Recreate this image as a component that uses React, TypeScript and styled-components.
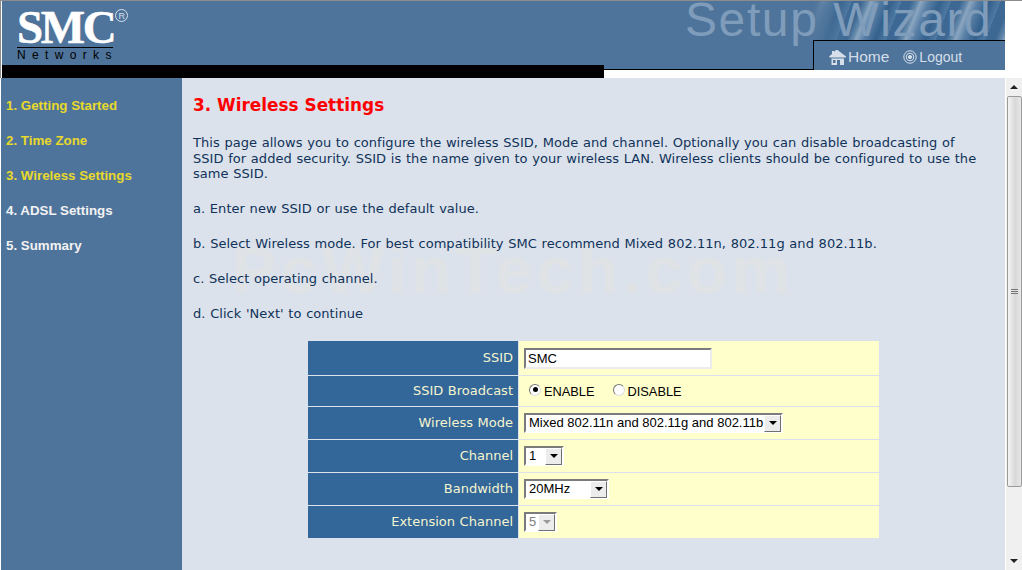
import React from 'react'
import styled, { createGlobalStyle } from 'styled-components'

const GlobalStyle = createGlobalStyle`
html, body {
  margin: 0;
  padding: 0;
  background: #fff;
  overflow: hidden;
}
`;

const Page = styled.div`
width: 1022px;
height: 570px;
display: flex;
flex-direction: column;
overflow: hidden;
box-sizing: border-box;
border-top: 1px solid #8c8c8c;
`;

// header
const Banner = styled.div`
height: 77px;
flex: none;
display: flex;
padding-left: 2px;
box-shadow: inset 1px 0 0 #8c8c8c;
`;
const BrandColumn = styled.div`
width: 602px;
display: flex;
flex-direction: column;
`;
const Brand = styled.div`
height: 64px;
flex: none;
background: #4f749b;
padding: 8px 0 0 15px;
box-sizing: border-box;
`;
const BlackBar = styled.div`
height: 13px;
background: #000;
`;
const Logo = styled.div`
position: relative;
width: 96px;
height: 38px;
font-family: "Liberation Serif", serif;
font-weight: bold;
font-size: 47px;
line-height: 37px;
letter-spacing: -2.4px;
-webkit-text-stroke: 0.5px #fff;
color: #fff;
white-space: nowrap;
border-bottom: 1px solid #000;
`;
const LogoMark = styled.span`
position: absolute;
display: block;
left: 98px;
top: 0;
width: 13px;
height: 13px;
color: #d5dfe9;
-webkit-text-stroke: 0;
svg {
  display: block;
}
`;
const LogoSub = styled.div`
font-family: "Liberation Sans", sans-serif;
font-size: 12px;
line-height: 14px;
letter-spacing: 6.35px;
color: #000;
white-space: nowrap;
`;
const WizardColumn = styled.div`
width: 401px;
height: 69px;
display: flex;
flex-direction: column;
`;
const WizardTitle = styled.div`
position: relative;
height: 39px;
flex: none;
box-sizing: border-box;
background:
  linear-gradient(90deg, #4f749b 0 205px, rgba(79, 116, 155, 0) 250px),
  repeating-linear-gradient(112deg, #3d6893 0 9px, #6489ab 15px, #8ba6c0 18px, #5a80a6 25px, #34618d 36px, #4f7aa3 46px);
font-family: "Liberation Sans", sans-serif;
font-size: 48px;
line-height: 37px;
letter-spacing: 1.6px;
color: #7f9cba;
padding-left: 81px;
white-space: nowrap;
`;
const TabRow = styled.div`
flex: 1;
display: flex;
`;
const TabSpacer = styled.div`
width: 209px;
flex: none;
background: #4f749b;
border-bottom: 1px solid #000;
`;
const Tab = styled.div`
flex: 1;
background: #4f749b;
border-top: 1px solid #000;
border-left: 1px solid #000;
display: flex;
align-items: center;
padding: 3px 0 0 15px;
gap: 14px;
`;
const TabLink = styled.a<{ $size: number }>`
display: inline-flex;
align-items: center;
gap: 2px;
font-family: "Liberation Sans", sans-serif;
font-size: ${({ $size }) => $size}px;
color: #d6dfe9;
svg {
  display: block;
}
`;

// body
const Main = styled.div`
flex: 1;
display: flex;
min-height: 0;
`;
const Sidebar = styled.ul`
width: 181px;
flex: none;
margin: 0 0 0 1px;
padding: 18px 0 0 5px;
box-sizing: border-box;
list-style: none;
background: #4f749b;
`;
const Step = styled.li<{ $done?: boolean }>`
font-family: "Liberation Sans", sans-serif;
font-size: 13.33px;
font-weight: bold;
line-height: 20px;
height: 35px;
white-space: nowrap;
color: ${({ $done }) => ($done ? '#e8d92a' : '#f2f2f2')};
`;
const Content = styled.div`
position: relative;
width: 823px;
flex: none;
padding: 17px 21px 0 11px;
box-sizing: border-box;
background: #dbe2eb;
font-family: "DejaVu Sans", sans-serif;
font-size: 13px;
line-height: 15.5px;
letter-spacing: 0.04px;
word-spacing: 0.5px;
color: #10325a;
`;
const Watermark = styled.div`
position: absolute;
left: 50px;
top: 157px;
font-family: "Liberation Sans", sans-serif;
font-size: 66px;
font-weight: bold;
line-height: 70px;
letter-spacing: 4.5px;
word-spacing: 0;
color: #e0e3e6;
white-space: nowrap;
pointer-events: none;
`;
const Heading = styled.h1`
position: relative;
margin: 0 0 20px;
font-size: 16.9px;
line-height: 20px;
font-weight: bold;
letter-spacing: 0;
word-spacing: 0;
color: #ff0000;
`;
const Text = styled.p`
position: relative;
margin: 0 0 19.5px;
`;

// form table
const FormTable = styled.div`
position: relative;
width: 571px;
margin: 19px 0 0 115px;
display: grid;
grid-template-columns: 210px 361px;
`;
const Label = styled.div<{ $h: number }>`
height: ${({ $h }) => $h}px;
box-sizing: border-box;
background: #336699;
color: #f4f5cf;
letter-spacing: 0;
padding-right: 5px;
display: flex;
align-items: center;
justify-content: flex-end;
border-bottom: 1px solid #dbe2eb;
&:nth-last-child(2) {
  border-bottom: 0;
}
`;
const Value = styled.div`
box-sizing: border-box;
background: #ffffcc;
border-left: 1px solid #dbe2eb;
border-bottom: 1px solid #dbe2eb;
padding-left: 5px;
display: flex;
align-items: center;
font-family: "Liberation Sans", sans-serif;
font-size: 13px;
letter-spacing: 0;
word-spacing: 0;
color: #000;
&:last-child {
  border-bottom: 0;
}
`;
const TextField = styled.div`
width: 188px;
height: 21px;
box-sizing: border-box;
background: #fff;
border: 2px solid;
border-color: #7b7b7b #ececec #ececec #7b7b7b;
padding-left: 2px;
line-height: 17px;
`;
const RadioGroup = styled.label`
display: inline-flex;
align-items: center;
gap: 3px;
margin: 2px 13px 0 5px;
font-size: 12.8px;
`;
const Radio = styled.span<{ $on?: boolean }>`
width: 12px;
height: 12px;
box-sizing: border-box;
border-radius: 50%;
background: #fff;
border: 1px solid;
border-color: #777 #ddd #ddd #777;
display: inline-flex;
align-items: center;
justify-content: center;
margin-top: -5px;
&::after {
  content: "";
  width: 5px;
  height: 5px;
  border-radius: 50%;
  background: ${({ $on }) => ($on ? '#000' : 'transparent')};
}
`;
const SelectBox = styled.div<{ $w: number; $off?: boolean }>`
width: ${({ $w }) => $w}px;
height: 20px;
box-sizing: border-box;
background: #fff;
border: 2px solid;
border-color: #7b7b7b #fff #fff #7b7b7b;
padding-left: 3px;
display: flex;
align-items: center;
justify-content: space-between;
white-space: nowrap;
color: ${({ $off }) => ($off ? '#808080' : '#000')};
`;
const SelectArrow = styled.span<{ $off?: boolean }>`
width: 17px;
height: 17px;
flex: none;
box-sizing: border-box;
background: #ececec;
border: 1px solid;
border-color: #fff #707070 #707070 #fff;
display: flex;
align-items: center;
justify-content: center;
&::after {
  content: "";
  border-left: 4px solid transparent;
  border-right: 4px solid transparent;
  border-top: 4px solid ${({ $off }) => ($off ? '#9a9a9a' : '#000')};
}
`;

// scrollbar
const ScrollBar = styled.div`
width: 17px;
flex: none;
box-sizing: border-box;
border-left: 1px solid #fff;
background: #f0f0f0;
display: flex;
flex-direction: column;
align-items: center;
`;
const ScrollArrow = styled.div<{ $up?: boolean }>`
height: 18px;
flex: none;
display: flex;
align-items: center;
justify-content: center;
&::after {
  content: "";
  border-left: 4px solid transparent;
  border-right: 4px solid transparent;
  ${({ $up }) => ($up ? 'border-bottom: 4px solid #222;' : 'border-top: 4px solid #222;')}
}
`;
const ScrollThumb = styled.div`
width: 15px;
height: 391px;
flex: none;
box-sizing: border-box;
border: 1px solid #9a9a9a;
border-radius: 2px;
background: linear-gradient(90deg, #f4f4f4, #d8d8d8 55%, #e8e8e8);
display: flex;
align-items: center;
justify-content: center;
&::after {
  content: "";
  width: 7px;
  height: 6px;
  background: repeating-linear-gradient(180deg, #777 0 1px, transparent 1px 2px);
}
`;
const ScrollGap = styled.div`
flex: 1;
`;

const HomeIcon = () => (
  <svg width="17" height="15" viewBox="0 0 17 15" fill="#d6dfe9">
    <path d="M8.5 0 L17 6.5 L17 7.5 L1 7.5 L0 6.5 L3 4 V1 H5 V2 L7 0 Z" />
    <path d="M2.5 8.5 H15 V15 H11 V10 H8 V15 H2.5 Z M4 10 V13 H6.5 V10 Z" fillRule="evenodd" />
  </svg>
);

const LogoutIcon = () => (
  <svg width="14" height="14" viewBox="0 0 14 14" fill="none" stroke="#d6dfe9">
    <circle cx="7" cy="7" r="6.2" />
    <circle cx="7" cy="7" r="3.8" />
    <circle cx="7" cy="7" r="1.6" fill="#d6dfe9" />
  </svg>
);

const App = () => {
  return (
    <Page>
      <GlobalStyle />

      {/* header */}
      <Banner>
        <BrandColumn>
          <Brand>
            <Logo>
              SMC
              <LogoMark>
                <svg width="13" height="13" viewBox="0 0 13 13" fill="none" stroke="currentColor">
                  <circle cx="6.5" cy="6.5" r="6" />
                  <text x="3.6" y="10" fontSize="9" fontFamily="Liberation Sans" fontWeight="normal" letterSpacing="0" stroke="none" fill="currentColor">R</text>
                </svg>
              </LogoMark>
            </Logo>
            <LogoSub>Networks</LogoSub>
          </Brand>
          <BlackBar />
        </BrandColumn>
        <WizardColumn>
          <WizardTitle>Setup Wizard</WizardTitle>
          <TabRow>
            <TabSpacer />
            <Tab>
              <TabLink $size={15.5}><HomeIcon />Home</TabLink>
              <TabLink $size={14}><LogoutIcon />Logout</TabLink>
            </Tab>
          </TabRow>
        </WizardColumn>
      </Banner>

      <Main>
        {/* left menu */}
        <Sidebar>
          <Step $done>1. Getting Started</Step>
          <Step $done>2. Time Zone</Step>
          <Step $done>3. Wireless Settings</Step>
          <Step>4. ADSL Settings</Step>
          <Step>5. Summary</Step>
        </Sidebar>

        <Content>
          <Watermark>PcWinTech.com</Watermark>
          <Heading>3. Wireless Settings</Heading>
          <Text>This page allows you to configure the wireless SSID, Mode and channel. Optionally you can disable broadcasting of SSID for added security. SSID is the name given to your wireless LAN. Wireless clients should be configured to use the same SSID.</Text>
          <Text>a. Enter new SSID or use the default value.</Text>
          <Text>b. Select Wireless mode. For best compatibility SMC recommend Mixed 802.11n, 802.11g and 802.11b.</Text>
          <Text>c. Select operating channel.</Text>
          <Text>d. Click 'Next' to continue</Text>

          <FormTable>
            <Label $h={35}>SSID</Label>
            <Value><TextField>SMC</TextField></Value>
            <Label $h={31}>SSID Broadcast</Label>
            <Value>
              <RadioGroup><Radio $on />ENABLE</RadioGroup>
              <RadioGroup><Radio />DISABLE</RadioGroup>
            </Value>
            <Label $h={33}>Wireless Mode</Label>
            <Value><SelectBox $w={259}>Mixed 802.11n and 802.11g and 802.11b<SelectArrow /></SelectBox></Value>
            <Label $h={33}>Channel</Label>
            <Value><SelectBox $w={40}>1<SelectArrow /></SelectBox></Value>
            <Label $h={33}>Bandwidth</Label>
            <Value><SelectBox $w={85}>20MHz<SelectArrow /></SelectBox></Value>
            <Label $h={32}>Extension Channel</Label>
            <Value><SelectBox $w={33} $off>5<SelectArrow $off /></SelectBox></Value>
          </FormTable>
        </Content>

        <ScrollBar>
          <ScrollArrow $up />
          <ScrollThumb />
          <ScrollGap />
          <ScrollArrow />
        </ScrollBar>
      </Main>
    </Page>
  )
}

export default App
